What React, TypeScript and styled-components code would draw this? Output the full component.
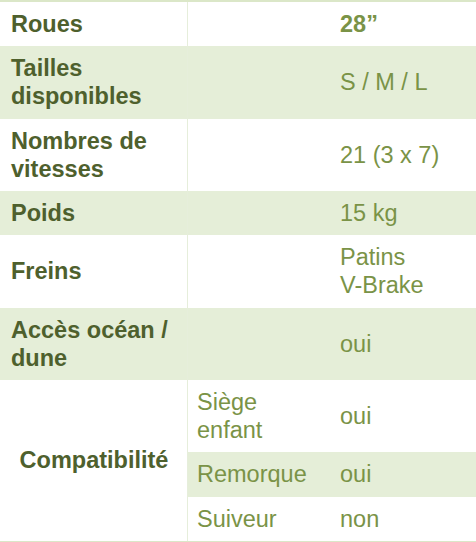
import styled, { createGlobalStyle } from "styled-components";

const GlobalStyle = createGlobalStyle`
  html, body {
    margin: 0;
    padding: 0;
    background: #ffffff;
  }
  body {
    font-family: "Liberation Sans", Arial, Helvetica, sans-serif;
  }
`;

const Table = styled.div`
  width: 476px;
  display: grid;
  grid-template-columns: 188px 142px 1fr;
  border-top: 2px solid #dbe7c8;
  border-bottom: 2px solid #dbe7c8;
  font-size: 23.5px;
  line-height: 28.2px;
`;

const Label = styled.div<{ shade?: boolean; span?: number; center?: boolean }>`
  grid-column: 1;
  grid-row: ${(p) => (p.span ? `span ${p.span}` : "auto")};
  display: flex;
  align-items: center;
  justify-content: ${(p) => (p.center ? "center" : "flex-start")};
  padding: 8px 10px 8px 11px;
  background: ${(p) => (p.shade ? "#e5eed8" : "#ffffff")};
  border-right: 1px solid #e6eedb;
  color: #4e602d;
  font-weight: 700;
`;

const SubLabel = styled.div<{ shade?: boolean }>`
  grid-column: 2;
  display: flex;
  align-items: center;
  padding: 8px 10px 8px 9px;
  background: ${(p) => (p.shade ? "#e5eed8" : "#ffffff")};
  color: #7a9347;
`;

const Spacer = styled.div<{ shade?: boolean }>`
  grid-column: 2;
  background: ${(p) => (p.shade ? "#e5eed8" : "#ffffff")};
`;

const Value = styled.div<{ shade?: boolean; bold?: boolean }>`
  grid-column: 3;
  display: flex;
  align-items: center;
  padding: 8px 10px;
  background: ${(p) => (p.shade ? "#e5eed8" : "#ffffff")};
  color: #7a9347;
  font-weight: ${(p) => (p.bold ? 700 : 400)};
`;

interface ISpec {
  label: string[];
  value: string[];
  bold?: boolean;
}

const specs: ISpec[] = [
  { label: ["Roues"], value: ["28\u201d"], bold: true },
  { label: ["Tailles", "disponibles"], value: ["S / M / L"] },
  { label: ["Nombres de", "vitesses"], value: ["21 (3 x 7)"] },
  { label: ["Poids"], value: ["15 kg"] },
  { label: ["Freins"], value: ["Patins", "V-Brake"] },
  { label: ["Accès océan /", "dune"], value: ["oui"] },
];

const compat = [
  { name: ["Siège", "enfant"], value: "oui" },
  { name: ["Remorque"], value: "oui" },
  { name: ["Suiveur"], value: "non" },
];

const Lines = ({ lines }: { lines: string[] }) => (
  <span>
    {lines.map((l, i) => (
      <span key={i}>
        {i > 0 && <br />}
        {l}
      </span>
    ))}
  </span>
);

const App = () => {
  return (
    <>
      <GlobalStyle />
      <Table>
        {specs.map((spec, i) => {
          const shade = i % 2 === 1;
          return [
            <Label key={`l${i}`} shade={shade}>
              <Lines lines={spec.label} />
            </Label>,
            <Spacer key={`s${i}`} shade={shade} />,
            <Value key={`v${i}`} shade={shade} bold={spec.bold}>
              <Lines lines={spec.value} />
            </Value>,
          ];
        })}
        <Label span={3} center>
          Compatibilité
        </Label>
        {compat.map((item, i) => {
          const shade = i === 1;
          return [
            <SubLabel key={`cl${i}`} shade={shade}>
              <Lines lines={item.name} />
            </SubLabel>,
            <Value key={`cv${i}`} shade={shade}>
              {item.value}
            </Value>,
          ];
        })}
      </Table>
    </>
  );
};

export default App;
